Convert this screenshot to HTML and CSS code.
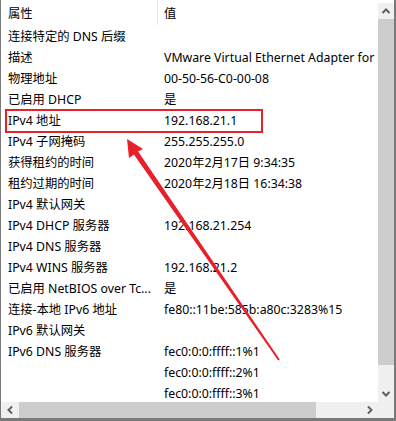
FILE: index.html
```html
<!DOCTYPE html>
<html lang="zh-CN">
<head>
<meta charset="utf-8">
<link rel="stylesheet" href="styles.css">
</head>
<body>
<div class="window">
  <div class="content">
    <div class="header">
      <div class="hcell hname">属性</div>
      <div class="hcell hval">值</div>
    </div>
    <div class="rows">
      <div class="row"><div class="name">连接特定的 DNS 后缀</div><div class="val"></div></div>
      <div class="row"><div class="name">描述</div><div class="val">VMware Virtual Ethernet Adapter for</div></div>
      <div class="row"><div class="name">物理地址</div><div class="val">00-50-56-C0-00-08</div></div>
      <div class="row"><div class="name">已启用 DHCP</div><div class="val">是</div></div>
      <div class="row"><div class="name">IPv4 地址</div><div class="val">192.168.21.1</div></div>
      <div class="row"><div class="name">IPv4 子网掩码</div><div class="val">255.255.255.0</div></div>
      <div class="row"><div class="name">获得租约的时间</div><div class="val">2020年2月17日 9:34:35</div></div>
      <div class="row"><div class="name">租约过期的时间</div><div class="val">2020年2月18日 16:34:38</div></div>
      <div class="row"><div class="name">IPv4 默认网关</div><div class="val"></div></div>
      <div class="row"><div class="name">IPv4 DHCP 服务器</div><div class="val">192.168.21.254</div></div>
      <div class="row"><div class="name">IPv4 DNS 服务器</div><div class="val"></div></div>
      <div class="row"><div class="name">IPv4 WINS 服务器</div><div class="val">192.168.21.2</div></div>
      <div class="row"><div class="name">已启用 NetBIOS over Tc...</div><div class="val">是</div></div>
      <div class="row"><div class="name">连接-本地 IPv6 地址</div><div class="val">fe80::11be:585b:a80c:3283%15</div></div>
      <div class="row"><div class="name">IPv6 默认网关</div><div class="val"></div></div>
      <div class="row"><div class="name">IPv6 DNS 服务器</div><div class="val">fec0:0:0:ffff::1%1</div></div>
      <div class="row"><div class="name"></div><div class="val">fec0:0:0:ffff::2%1</div></div>
      <div class="row"><div class="name"></div><div class="val">fec0:0:0:ffff::3%1</div></div>
    </div>
  </div>
  <div class="vscroll">
    <div class="sbtn">
      <svg width="16" height="16" viewBox="0 0 16 16"><polyline points="4.5,10 8,6.5 11.5,10" fill="none" stroke="#606060" stroke-width="2"/></svg>
    </div>
    <div class="vthumb"></div>
    <div class="vtrack"></div>
    <div class="sbtn">
      <svg width="16" height="16" viewBox="0 0 16 16"><polyline points="4.5,6 8,9.5 11.5,6" fill="none" stroke="#606060" stroke-width="2"/></svg>
    </div>
  </div>
  <div class="hscroll">
    <div class="sbtn hbtn">
      <svg width="17" height="16" viewBox="0 0 17 16"><polyline points="10,4.5 6.5,8 10,11.5" fill="none" stroke="#606060" stroke-width="2"/></svg>
    </div>
    <div class="hthumb"></div>
    <div class="htrack"></div>
    <div class="sbtn">
      <svg width="16" height="16" viewBox="0 0 16 16"><polyline points="6,4.5 9.5,8 6,11.5" fill="none" stroke="#606060" stroke-width="2"/></svg>
    </div>
  </div>
  <div class="corner"></div>
</div>
<div class="highlight"></div>
<svg class="arrow" width="396" height="421" viewBox="0 0 396 421">
  <polygon points="127,139 143,149 138.1,151.6 279.8,359.4 278.2,360.6 133.9,154.4 129,158" fill="#e8202a"/>
</svg>
</body>
</html>
```

FILE: styles.css
```css
html, body {
  margin: 0;
  padding: 0;
  background: #ffffff;
}
body {
  position: relative;
  width: 396px;
  height: 421px;
  overflow: hidden;
  font-family: "Noto Sans", "Noto Sans CJK SC", sans-serif;
  font-size: 12.3px;
  color: #000;
}
.window {
  box-sizing: border-box;
  width: 396px;
  height: 421px;
  border-left: 1px solid #7a7a7a;
  border-right: 2px solid #7a7a7a;
  border-bottom: 3px solid #7a7a7a;
  display: grid;
  grid-template-columns: 1fr 16px;
  grid-template-rows: 1fr 16px;
  background: #fff;
}
.content {
  overflow: hidden;
  min-width: 0;
  min-height: 0;
}
.header {
  display: flex;
  height: 26px;
  box-sizing: border-box;
  padding-top: 1px;
}
.hcell {
  line-height: 25px;
  white-space: nowrap;
}
.hname {
  width: 149px;
  padding-left: 7px;
  border-right: 1px solid #e5e5e5;
  height: 25px;
  margin-top: -1px;
  line-height: 27px;
}
.hval {
  padding-left: 6px;
}
.rows {
  display: flex;
  flex-direction: column;
}
.row {
  display: flex;
  height: 21px;
  line-height: 21px;
  white-space: nowrap;
}
.name {
  flex: 0 0 150px;
  width: 150px;
  padding-left: 7px;
  overflow: hidden;
}
.val {
  padding-left: 6px;
  white-space: nowrap;
}
.vscroll {
  display: flex;
  flex-direction: column;
  background: #f0f0f0;
  border-top: 3px solid #fff;
}
.sbtn {
  flex: 0 0 16px;
  height: 16px;
  display: flex;
  align-items: center;
  justify-content: center;
}
.sbtn svg { display: block; }
.vthumb {
  height: 346px;
  background: #cdcdcd;
}
.vtrack {
  flex: 1;
}
.hscroll {
  display: flex;
  background: #f0f0f0;
}
.hbtn {
  flex: 0 0 18px;
}
.hthumb {
  width: 297px;
  background: #cdcdcd;
}
.htrack {
  flex: 1;
}
.corner {
  background: #f0f0f0;
}
.highlight {
  position: absolute;
  left: 5px;
  top: 109px;
  width: 254px;
  height: 20px;
  border: 2px solid #e8202a;
}
.arrow {
  position: absolute;
  left: 0;
  top: 0;
  pointer-events: none;
}
```
